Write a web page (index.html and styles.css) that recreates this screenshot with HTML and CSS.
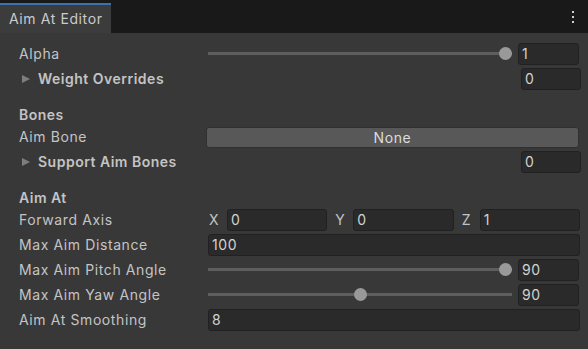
FILE: index.html
```html
<!DOCTYPE html>
<html lang="en">
<head>
  <meta charset="UTF-8">
  <title>Aim At Editor</title>
  <link rel="stylesheet" href="styles.css">
</head>
<body>

  <div class="tabbar">
    <div class="tab">Aim At Editor</div>
    <div class="menu"><span></span><span></span><span></span></div>
  </div>

  <div class="inspector">
    <div class="row">
      <div class="label">Alpha</div>
      <div class="slider">
        <div class="track"><div class="rail"><div class="thumb" style="left: 100%"></div></div></div>
        <div class="field num">1</div>
      </div>
    </div>
    <div class="row">
      <div class="label foldout"><span class="arrow"></span>Weight Overrides</div>
      <div class="value right"><div class="field int">0</div></div>
    </div>

    <div class="header">Bones</div>
    <div class="row">
      <div class="label">Aim Bone</div>
      <div class="value"><div class="button">None</div></div>
    </div>
    <div class="row">
      <div class="label foldout"><span class="arrow"></span>Support Aim Bones</div>
      <div class="value right"><div class="field int">0</div></div>
    </div>

    <div class="header">Aim At</div>
    <div class="row">
      <div class="label">Forward Axis</div>
      <div class="vector">
        <div class="axis"><span>X</span><div class="field">0</div></div>
        <div class="axis"><span>Y</span><div class="field">0</div></div>
        <div class="axis"><span>Z</span><div class="field">1</div></div>
      </div>
    </div>
    <div class="row">
      <div class="label">Max Aim Distance</div>
      <div class="value"><div class="field">100</div></div>
    </div>
    <div class="row">
      <div class="label">Max Aim Pitch Angle</div>
      <div class="slider">
        <div class="track"><div class="rail"><div class="thumb" style="left: 100%"></div></div></div>
        <div class="field num">90</div>
      </div>
    </div>
    <div class="row">
      <div class="label">Max Aim Yaw Angle</div>
      <div class="slider">
        <div class="track"><div class="rail"><div class="thumb" style="left: 50%"></div></div></div>
        <div class="field num">90</div>
      </div>
    </div>
    <div class="row">
      <div class="label">Aim At Smoothing</div>
      <div class="value"><div class="field">8</div></div>
    </div>
  </div>

</body>
</html>
```

FILE: styles.css
```css
body {
  margin: 0;
  background-color: #383838;
  font-family: Inter, "Noto Sans", sans-serif;
  font-size: 14px;
  letter-spacing: 0.6px;
  color: #c4c4c4;
}
.tabbar {
  display: flex;
  align-items: stretch;
  height: 33px;
  background-color: #191919;
}
.tab {
  width: 111px;
  box-sizing: border-box;
  border-top: 2px solid #3a72b0;
  margin-top: 3px;
  padding: 5px 0 0 9px;
  background-color: #3c3c3c;
  color: #cbcbcb;
  white-space: nowrap;
}
.menu {
  margin-left: auto;
  margin-right: 14px;
  display: flex;
  flex-direction: column;
  justify-content: center;
  gap: 3px;
}
.menu span {
  width: 2px;
  height: 2px;
  background-color: #d0d0d0;
}
.inspector {
  padding: 8px 8px 0 19px;
}
.row {
  display: flex;
  align-items: center;
  height: 25px;
}
.label {
  width: 189px;
  flex: none;
  display: flex;
  align-items: center;
  white-space: nowrap;
}
.foldout {
  font-weight: 600;
  letter-spacing: 0.5px;
}
.arrow {
  width: 0;
  height: 0;
  margin: 0 8px 0 3px;
  border-top: 4.5px solid transparent;
  border-bottom: 4.5px solid transparent;
  border-left: 8px solid #7e7e7e;
}
.header {
  font-weight: 600;
  letter-spacing: 0.5px;
  height: 21px;
  line-height: 24px;
  margin-top: 12px;
}
.value {
  flex: 1;
  display: flex;
}
.value.right {
  justify-content: flex-end;
}
.field {
  box-sizing: border-box;
  height: 22px;
  line-height: 20px;
  padding: 0 3px;
  flex: 1;
  background-color: #2a2a2a;
  border: 1px solid #212121;
  border-radius: 3px;
  color: #d2d2d2;
}
.field.int {
  flex: none;
  width: 60px;
  margin-right: -1px;
}
.field.num {
  flex: none;
  width: 61px;
  margin-right: 1px;
}
.button {
  flex: 1;
  height: 21px;
  line-height: 19px;
  box-sizing: border-box;
  margin: 1px 1px 0 -2px;
  text-align: center;
  background-color: #585858;
  border: 1px solid #303030;
  border-radius: 3px;
  color: #dcdcdc;
}
.slider {
  flex: 1;
  display: flex;
  align-items: center;
  gap: 6px;
}
.track {
  flex: 1;
  height: 3px;
  background-color: #5e5e5e;
}
.rail {
  position: relative;
  height: 3px;
  margin: 0 6.5px;
}
.thumb {
  position: absolute;
  top: -5px;
  width: 13px;
  height: 13px;
  margin-left: -6.5px;
  border-radius: 50%;
  background-color: #999999;
}
.vector {
  flex: 1;
  display: flex;
  gap: 7px;
}
.axis {
  flex: 1;
  display: flex;
  align-items: center;
}
.axis span {
  width: 19px;
  flex: none;
  padding-left: 1px;
  box-sizing: border-box;
}
```
